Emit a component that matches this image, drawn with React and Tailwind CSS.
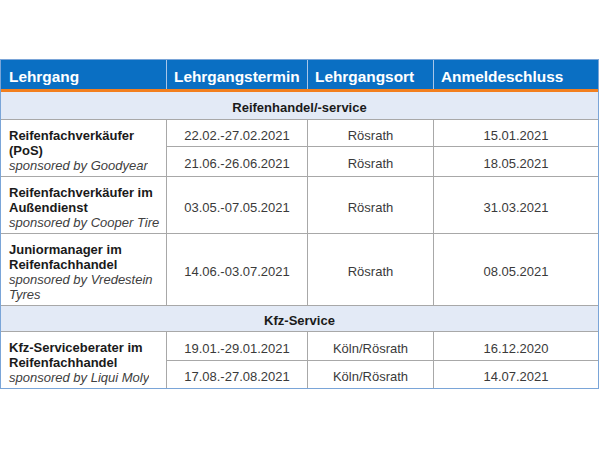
import React from "react";

const font = { fontFamily: '"Liberation Sans", Arial, sans-serif' };

function Name({ lines, sponsor }) {
  return (
    <div className="bg-white pl-2 pt-[5px] flex flex-col justify-center leading-[15px] text-[13px] whitespace-nowrap">
      {lines.map((l, i) => (
        <span key={i} className="font-bold text-[#1a1a1a]">{l}</span>
      ))}
      {sponsor.map((s, i) => (
        <span key={"s" + i} className="italic text-[#404040]">{s}</span>
      ))}
    </div>
  );
}

function Cell({ children, className = "" }) {
  return (
    <div className={"bg-white flex items-center justify-center pt-[5px] text-[13px] text-[#3a3a3a] " + className}>
      {children}
    </div>
  );
}

export default function App() {
  return (
    <div className="bg-white w-[600px] h-[450px] pt-[59px]" style={font}>
      <div className="w-[599px] border border-[#7aa5d8]">
        <div className="grid grid-cols-[165px_140px_125px_164px] gap-px bg-[#a9c6e8] h-[29px]">
          {["Lehrgang", "Lehrgangstermin", "Lehrgangsort", "Anmeldeschluss"].map((h, i) => (
            <div key={h} className={"bg-[#0a6fc3] text-white font-bold text-[15.4px] pt-[4px] flex items-center " + (i === 0 ? "pl-2" : "pl-[7px]")}>
              {h}
            </div>
          ))}
        </div>
        <div className="h-[3px] bg-[#f27f1e]" />
        <div className="h-[28px] bg-[#e3eaf6] flex items-center justify-center pt-[4px] font-bold text-[13px] text-[#1a1a1a] border-b border-[#a8a8a8]">
          Reifenhandel/-service
        </div>
        <div className="grid grid-cols-[165px_140px_125px_164px] grid-rows-[26px_29px_56px_71px] gap-px bg-[#a8a8a8] border-b border-[#a8a8a8]">
          <div className="row-span-2 flex">
            <Name lines={["Reifenfachverkäufer", "(PoS)"]} sponsor={["sponsored by Goodyear"]} />
            <div className="flex-1 bg-white" />
          </div>
          <Cell>22.02.-27.02.2021</Cell>
          <Cell>Rösrath</Cell>
          <Cell>15.01.2021</Cell>
          <Cell>21.06.-26.06.2021</Cell>
          <Cell>Rösrath</Cell>
          <Cell>18.05.2021</Cell>

          <Name lines={["Reifenfachverkäufer im", "Außendienst"]} sponsor={["sponsored by Cooper Tire"]} />
          <Cell>03.05.-07.05.2021</Cell>
          <Cell>Rösrath</Cell>
          <Cell>31.03.2021</Cell>

          <Name lines={["Juniormanager im", "Reifenfachhandel"]} sponsor={["sponsored by Vredestein", "Tyres"]} />
          <Cell>14.06.-03.07.2021</Cell>
          <Cell>Rösrath</Cell>
          <Cell>08.05.2021</Cell>
        </div>
        <div className="h-[26px] bg-[#e3eaf6] flex items-center justify-center pt-[4px] font-bold text-[13px] text-[#1a1a1a] border-b border-[#a8a8a8]">
          Kfz-Service
        </div>
        <div className="grid grid-cols-[165px_140px_125px_164px] grid-rows-[28px_27px] gap-px bg-[#a8a8a8]">
          <div className="row-span-2 flex">
            <Name lines={["Kfz-Serviceberater im", "Reifenfachhandel"]} sponsor={["sponsored by Liqui Moly"]} />
            <div className="flex-1 bg-white" />
          </div>
          <Cell>19.01.-29.01.2021</Cell>
          <Cell>Köln/Rösrath</Cell>
          <Cell>16.12.2020</Cell>
          <Cell>17.08.-27.08.2021</Cell>
          <Cell>Köln/Rösrath</Cell>
          <Cell>14.07.2021</Cell>
        </div>
      </div>
    </div>
  );
}
